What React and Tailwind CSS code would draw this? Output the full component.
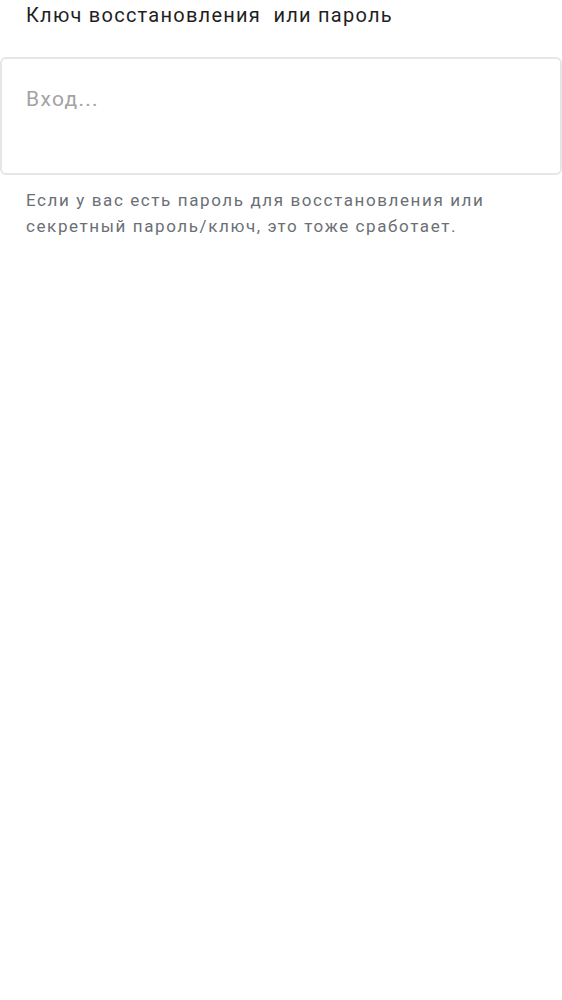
export default function App() {
  return (
    <div className="min-h-screen bg-white" style={{ fontFamily: "Roboto, 'Noto Sans', sans-serif" }}>
      <label className="block px-[26px] pt-[2px] text-[20px] leading-[26px] tracking-[1.25px] text-[#1f1f1f] whitespace-pre">
        {"Ключ восстановления  или пароль"}
      </label>
      <div className="mt-[29px] h-[118px] rounded-[6px] border-2 border-[#e6e6e6] px-[24px] pt-[27px]">
        <textarea
          placeholder="Вход..."
          className="w-full h-full resize-none outline-none text-[21px] leading-[26px] tracking-[1.3px] text-[#333] placeholder:text-[#a3a3a3]"
        />
      </div>
      <p className="px-[26px] mt-[12px] text-[17px] leading-[26px] tracking-[1.6px] text-[#6b6f76]">
        Если у вас есть пароль для восстановления или секретный пароль/ключ, это тоже сработает.
      </p>
    </div>
  );
}
